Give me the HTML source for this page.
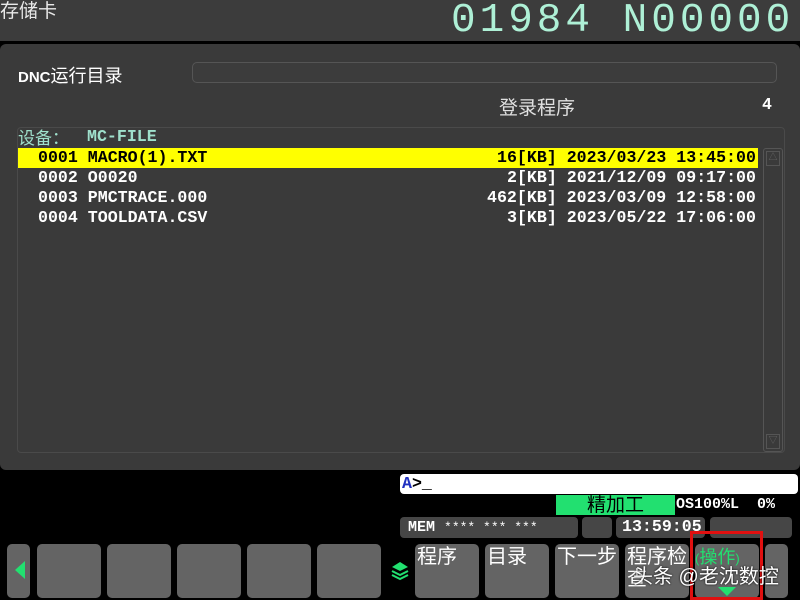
<!DOCTYPE html>
<html><head><meta charset="utf-8"><style>
*{margin:0;padding:0;box-sizing:border-box}
body{width:800px;height:600px;background:#000;position:relative;overflow:hidden;font-family:"Liberation Mono","Noto Sans CJK SC",monospace;color:#fff}
.a{position:absolute}
.m{font-family:"Liberation Mono",monospace;font-weight:bold;font-size:16.6px;line-height:20px;white-space:pre}
.cj{font-family:"Liberation Sans","Noto Sans CJK SC",sans-serif}
.btn{position:absolute;top:544px;height:54px;background:#646464;border-radius:5px}
.bt{font-family:"Liberation Sans","Noto Sans CJK SC",sans-serif;font-size:20px;color:#fff;padding:2px 0 0 2px;line-height:22px}
</style></head><body>
<div class="a" style="left:0;top:0;width:800px;height:41px;background:#3c3c3c"></div>
<div class="a cj" style="left:0;top:0;font-size:19px;color:#e8e8e8;line-height:24px">存储卡</div>
<div class="a" style="left:451px;top:0px;font-family:'Liberation Mono',monospace;font-size:41px;color:#aef0d6;letter-spacing:4px;line-height:42px;white-space:pre">01984 N00000</div>
<div class="a" style="left:0;top:44px;width:800px;height:426px;background:#3a3a3a;border-radius:6px"></div>
<div class="a cj" style="left:18px;top:62px;font-size:18px;color:#fff"><b style="font-family:'Liberation Sans';font-size:15px">DNC</b>运行目录</div>
<div class="a" style="left:192px;top:62px;width:585px;height:21px;border:1px solid #555;border-radius:5px;background:#3c3c3c"></div>
<div class="a cj" style="left:499px;top:93px;font-size:19px;color:#e0e0e0">登录程序</div>
<div class="a m" style="left:762px;top:95px">4</div>
<div class="a" style="left:17px;top:127px;width:768px;height:326px;border:1px solid #4a4a4a;border-radius:4px"></div>
<div class="a cj" style="left:18px;top:124px;font-size:17px;color:#9fe0cc">设备：</div>
<div class="a m" style="left:87px;top:127px;color:#9fe0cc">MC-FILE</div>
<div class="a" style="left:18px;top:148px;width:740px;height:20px;background:#ffff00"></div>
<div class="a m" style="left:38px;top:148px;color:#000">0001 MACRO(1).TXT</div>
<div class="a m" style="left:497px;top:148px;color:#000">16[KB] 2023/03/23 13:45:00</div>
<div class="a m" style="left:38px;top:168px">0002 O0020</div>
<div class="a m" style="left:507px;top:168px">2[KB] 2021/12/09 09:17:00</div>
<div class="a m" style="left:38px;top:188px">0003 PMCTRACE.000</div>
<div class="a m" style="left:487px;top:188px">462[KB] 2023/03/09 12:58:00</div>
<div class="a m" style="left:38px;top:208px">0004 TOOLDATA.CSV</div>
<div class="a m" style="left:507px;top:208px">3[KB] 2023/05/22 17:06:00</div>
<div class="a" style="left:763px;top:148px;width:20px;height:304px;border:1px solid #555;border-radius:3px"></div>
<div class="a" style="left:766px;top:151px;width:14px;height:15px;border:1px solid #555;color:#666;font-size:9px;text-align:center;line-height:13px">△</div>
<div class="a" style="left:766px;top:434px;width:14px;height:15px;border:1px solid #555;color:#666;font-size:9px;text-align:center;line-height:13px">▽</div>
<div class="a" style="left:400px;top:474px;width:398px;height:20px;background:#fff;border-radius:4px"></div>
<div class="a m" style="left:402px;top:474px;color:#000"><span style="color:#2030c0">A</span>&gt;_</div>
<div class="a cj" style="left:556px;top:495px;width:119px;height:20px;background:#22e070;color:#000;font-size:19px;text-align:center;line-height:21px">精加工</div>
<div class="a m" style="left:676px;top:495px;font-size:15px">OS100%L  0%</div>
<div class="a" style="left:400px;top:517px;width:178px;height:21px;background:#464646;border-radius:4px"></div>
<div class="a m" style="left:408px;top:518px;font-size:15px">MEM <span style="font-weight:normal;font-size:13px">**** *** ***</span></div>
<div class="a" style="left:582px;top:517px;width:30px;height:21px;background:#464646;border-radius:4px"></div>
<div class="a" style="left:616px;top:517px;width:89px;height:21px;background:#464646;border-radius:4px"></div>
<div class="a m" style="left:622px;top:517px">13:59:05</div>
<div class="a" style="left:710px;top:517px;width:82px;height:21px;background:#464646;border-radius:4px"></div>
<div class="btn" style="left:7px;width:23px"></div>
<div class="a" style="left:15px;top:561px;width:0;height:0;border-top:9px solid transparent;border-bottom:9px solid transparent;border-right:10px solid #22e070"></div>
<div class="btn" style="left:37px;width:64px"></div>
<div class="btn" style="left:107px;width:64px"></div>
<div class="btn" style="left:177px;width:64px"></div>
<div class="btn" style="left:247px;width:64px"></div>
<div class="btn" style="left:317px;width:64px"></div>
<svg class="a" style="left:391px;top:561px" width="18" height="22"><path d="M9 1 L17 6 L9 10 L1 6Z" fill="#22e070"/><path d="M1 10 L9 14 L17 10 M1 14 L9 18 L17 14" stroke="#22e070" stroke-width="2" fill="none"/></svg>
<div class="btn bt" style="left:415px;width:64px">程序</div>
<div class="btn bt" style="left:485px;width:64px">目录</div>
<div class="btn bt" style="left:555px;width:64px">下一步</div>
<div class="btn bt" style="left:625px;width:64px">程序检查</div>
<div class="btn bt" style="left:695px;width:64px;color:#22e070;font-size:18px;white-space:nowrap;overflow:hidden;padding-left:0"><span style="font-size:13px">(</span>操作<span style="font-size:13px">)</span></div>
<div class="a" style="left:718px;top:587px;width:0;height:0;border-left:9px solid transparent;border-right:9px solid transparent;border-top:9px solid #22e070"></div>
<div class="btn" style="left:765px;width:23px"></div>
<div class="a" style="left:690px;top:531px;width:73px;height:69px;border:3px solid #e01010"></div>
<div class="a cj" style="left:633px;top:560px;font-size:20px;color:#fff;text-shadow:0 0 2px #000;white-space:nowrap">头条 @老沈数控</div>
</body></html>
